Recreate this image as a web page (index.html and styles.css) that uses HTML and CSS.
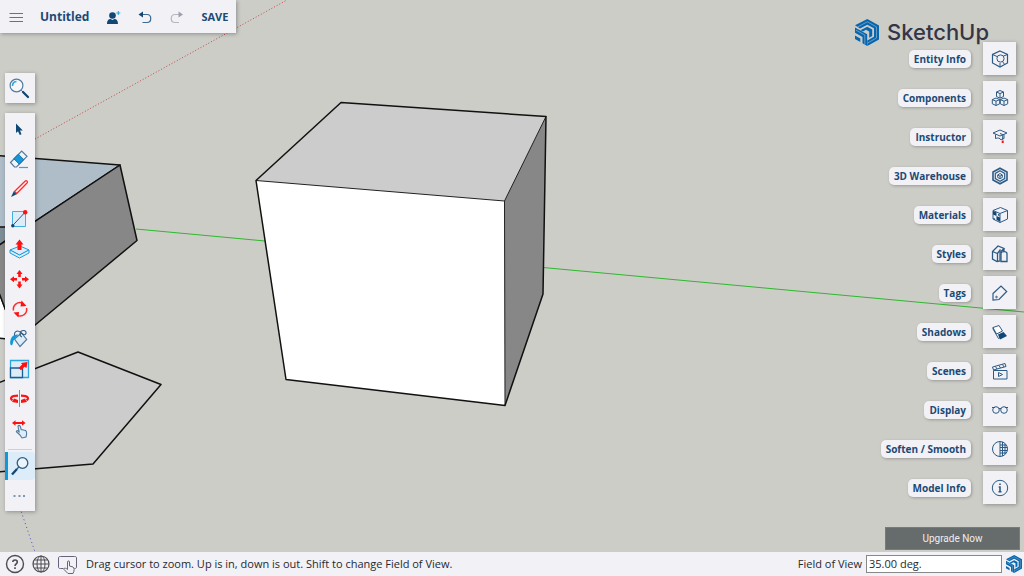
FILE: index.html
```html
<!DOCTYPE html>
<html lang="en">
<head>
<meta charset="utf-8">
<meta name="viewport" content="width=device-width, initial-scale=1">
<title>Untitled - SketchUp</title>
<link rel="stylesheet" href="styles.css">
</head>
<body>
<svg class="defs" aria-hidden="true">
  <symbol id="mark" viewBox="0 0 24 27">
    <path d="M0 6.2 12.3 0 24 6.4V20.4L12.3 27V21.5L19 17.7V9.3L12.3 5.7 5 9.4Z" fill="#0766b0"/>
    <path d="M0 8.5 12.2 15.2V27L7.5 24.3V18L0 13.8Z" fill="#0766b0"/>
    <path d="M5.5 11.2 12.3 7.8 17.2 10.5V17L14.2 18.8V12.4L11 10.8 8 12.6Z" fill="#0766b0"/>
    <path d="M0 16.6 5.3 19.5V23L0 20Z" fill="#0766b0"/>
    <path d="M2.5 8 12.3 2.8 21.5 7.9V19L12.3 24.2M1 11.2 9.8 16V25.5" fill="none" stroke="#a9c0cb" stroke-width=".6"/>
  </symbol>
</svg>
<div class="app">
  <main class="workspace">
    <svg class="scene" role="img" aria-label="Model view">
      <path class="axis-red" d="M35 139 287 0"/>
      <path class="axis-blue" d="M20 508 35 552"/>
      <path class="axis-green" d="M136 229 265 241M543 267.500 1024 312 1600 365"/>
      <g class="edges">
        <path fill="#aebdc8" d="M-2 155.500 120 165-2 246Z"/>
        <path fill="#7e8c95" d="M-2 227H25L-2 246Z"/>
        <path fill="#fff" d="M-2 290 17 340-2 338Z"/>
        <path fill="#878787" d="M120 165 137 240.500 17 340-2 290V246Z"/>
        <path fill="#ccc" d="M78 352 161 384.500 93 464-2 472V383Z"/>
      </g>
      <path fill="#ccc" d="M341 102.500 546 116.500 504.500 201 256 180.500Z"/>
      <path fill="#fff" d="M256 180.500 504.500 201 505 405.500 286 379.500Z"/>
      <path fill="#878787" d="M546 116.500 504.500 201 505 405.500 543 294Z"/>
      <path class="inner" d="M256 180.500 504.500 201 546 116.500M504.500 201 505 405.500"/>
      <path class="outline" d="M341 102.500 546 116.500 543 294 505 405.500 286 379.500 256 180.500Z"/>
    </svg>

    <div class="left">
      <header class="topbar">
        <button aria-label="Menu"><svg class="i16" viewBox="0 0 16 16"><path d="M1.500 4.500H15M1.500 8.500H15M1.500 12.500H15" stroke="#50799b" stroke-width="1.200"/></svg></button>
        <h1 class="title">Untitled</h1>
        <button aria-label="Share"><svg class="i16" viewBox="0 0 16 16"><circle cx="7.500" cy="6.500" r="3.300" fill="#0f4775"/><path d="M2 15C2 11 4 10 5.500 10L7.500 11 9.500 10C11 10 13 11 13 15Z" fill="#0f4775"/><path d="M13.300 2V6M11.300 4H15.300" stroke="#2ea3dc"/></svg></button>
        <button aria-label="Undo"><svg class="i16" viewBox="0 0 16 16"><path d="M5 5.500H10C15 5.500 15 13.500 10 13.500H5.500" fill="none" stroke="#3a6a91" stroke-width="1.200"/><path d="M1.500 5.500 6 2.500V8.500Z" fill="#0f4775"/></svg></button>
        <button aria-label="Redo"><svg class="i16" viewBox="0 0 16 16"><path d="M10 5.500H6C1 5.500 1 13.500 6 13.500H10" fill="none" stroke="#b5b7c0" stroke-width="1.200"/><path d="M14 5.500 9.500 2.500V8.500Z" fill="#9d9fab"/></svg></button>
        <button class="save">SAVE</button>
      </header>

      <button class="search" aria-label="Search"><svg class="i24" viewBox="0 0 24 24"><circle cx="8.500" cy="9.500" r="6.400" fill="#f5f7fa" stroke="#537a9d" stroke-width="1.200"/><path d="M4.500 10C4.500 7.500 6 5.700 8.500 5.500" fill="none" stroke="#2ba7e0" stroke-width="1.700"/><path d="M13.200 14.200 15 16" stroke="#537a9d"/><path d="M15 16 20 21" stroke="#0f4775" stroke-width="2.300" stroke-linecap="round"/></svg></button>

      <nav class="tools" aria-label="Tools">
        <button class="tool" aria-label="Select"><svg class="i24" viewBox="0 0 24 24"><path d="M8 6.500V16L10 14.200 11.800 18 13.500 17.200 12 13.600H14.800Z" fill="#0f4775"/></svg></button>
        <button class="tool" aria-label="Eraser"><svg class="i24" viewBox="0 0 24 24"><path d="M2.500 15.500 13.700 4 19 9.300 8.500 20H6.500Z" fill="#eef5fb" stroke="#537a9d" stroke-width="1.200"/><path d="M5.800 11.800 10.300 7.200 15.800 12.600 11.300 17.200Z" fill="#0f98db" stroke="#1c5e91" stroke-width=".8"/><path d="M11 20.500H20" stroke="#2ba7e0" stroke-width="1.200"/></svg></button>
        <button class="tool" aria-label="Line"><svg class="i24" viewBox="0 0 24 24"><path d="M6.500 14.500 17 4.200C18.500 3 20.300 4.600 19 6L8.700 16.500Z" fill="#fff" stroke="#ff2a2a" stroke-width="1.300"/><path d="M3 20 5.700 14.500 8.700 17.200Z" fill="#0f4775"/></svg></button>
        <button class="tool" aria-label="Rectangle"><svg class="i24" viewBox="0 0 24 24"><path d="M4.500 4.500H17.500V19.500H4.500Z" fill="#dcecf8" stroke="#44aee0"/><path d="M4.500 18.700 17 5.300" stroke="#315c83"/><circle cx="4.800" cy="18.800" r="1.700" fill="#0f4775"/><circle cx="17.200" cy="5.200" r="2.200" fill="#f11"/></svg></button>
        <button class="tool" aria-label="Push/Pull"><svg class="i24" viewBox="0 0 24 24"><path d="M2 13 12 9 21 13 11.500 18Z" fill="#dcecf8" stroke="#1e9bd7"/><path d="M2 13V16L11.500 21 21 16V13L11.500 18Z" fill="#dcecf8" stroke="#1e9bd7"/><path d="M11.500 2.500 15.500 7.500H13.500V13H9.500V7.500H7.500Z" fill="#f11"/></svg></button>
        <button class="tool" aria-label="Move"><svg class="i24" viewBox="0 0 24 24"><path d="M11.500 3 14.500 7H12.800V10H10.200V7H8.500ZM11.500 21.500 14.500 17.500H12.800V14.500H10.200V17.500H8.500ZM2 12.200 6 9.200V11H9V13.500H6V15.200ZM21 12.200 17 9.200V11H14V13.500H17V15.200Z" fill="#f11"/></svg></button>
        <button class="tool" aria-label="Rotate"><svg class="i24" viewBox="0 0 24 24"><path d="M5.500 13.500A6.500 6.500 0 0 1 14.500 6.200M18.500 11A6.500 6.500 0 0 1 9.500 18.400" fill="none" stroke="#ff2a2a" stroke-width="1.500"/><path d="M13.500 3.500 18.500 9 12.500 9.500ZM10.500 20.500 5.500 15.500 11 15Z" fill="#f11"/></svg></button>
        <button class="tool" aria-label="Paint"><svg class="i24" viewBox="0 0 24 24"><path d="M6.500 12 13.500 6 18.700 12.500 12 19.500Z" fill="#dcecf8" stroke="#537a9d" stroke-width="1.200"/><path d="M6.500 9C6 3.500 10 2.500 14 6.500 18 10.500 20 3.500 15.500 3.500 11.500 3.500 11 9 14 10" fill="none" stroke="#315c83" stroke-width="1.100"/><path d="M2.300 17.500C1.500 11 5 7 10.500 7.500L6.500 12C5 13.500 5.500 15.500 4 18.500Z" fill="#0f98db"/></svg></button>
        <button class="tool" aria-label="Scale"><svg class="i24" viewBox="0 0 24 24"><path d="M2.500 3.500H20.500V20.500H2.500Z" fill="#dcecf8" stroke="#2ba7e0" stroke-width="1.300"/><path d="M2.500 11H14.500V20.500H2.500Z" fill="#dcecf8" stroke="#1c5e91" stroke-width="1.300"/><path d="M19.500 5 18.500 11 16.500 9.800 13 13.300 10.500 11 14.200 7.600 13 6Z" fill="#f11"/></svg></button>
        <button class="tool" aria-label="Flip"><svg class="i24" viewBox="0 0 24 24"><path d="M10 8.700C3 8.700 1.500 11.500 4.500 13.300M13 8.700C20 8.700 21.500 11.500 18.500 13.300" fill="none" stroke="#f11" stroke-width="2.200"/><path d="M10 13 6 11.500 4 15 10 16ZM13 13 17 11.500 19 15 13 16Z" fill="#f11"/><path d="M11.500 3V20" stroke="#7890a8"/></svg></button>
        <button class="tool" aria-label="Interact"><svg class="i24" viewBox="0 0 24 24"><path d="M11.500 17.500 8.500 15C8 13.500 9.500 13.200 10.500 14.500L11.300 15.500 10 9.500C10 8 12 8 12.300 9.500L13.200 12.500 17.500 13.500C19 14.500 18.700 17.500 18 20L14 21Z" fill="#dcecf8" stroke="#537a9d" stroke-width="1.100"/><path d="M4 6 7.500 3.200V5H14V3.200L17.500 6 14 8.800V7H7.500V8.800Z" fill="#f11"/></svg></button>
        <hr class="rule">
        <button class="tool active" aria-label="Zoom" aria-pressed="true"><svg class="i24" viewBox="0 0 24 24"><circle cx="14.500" cy="9" r="5.300" fill="#eaf4fb" stroke="#315c83" stroke-width="1.300"/><path d="M10.700 13 9 15" stroke="#315c83" stroke-width="1.300"/><path d="M9 15 4 20.500" stroke="#0f4775" stroke-width="2.300"/></svg></button>
        <button class="tool" aria-label="More tools"><svg class="i24" viewBox="0 0 24 24"><path d="M5.500 13H7.500M10.500 13H12.500M15 13H17" stroke="#537a9d" stroke-width="1.500"/></svg></button>
      </nav>
    </div>

    <div class="right">
      <div class="brand"><svg class="brand-mark"><use href="#mark"/></svg><span>SketchUp</span></div>
      <nav class="panels" aria-label="Panels">
        <button class="panel"><span class="label">Entity Info</span><span class="tile"><svg class="i24" viewBox="0 0 24 24"><path stroke-width="1.200" d="M12 4 19.500 7.500V16L12 20 4.500 16V7.500Z"/><path d="M4.500 7.500 9 9.500M19.500 7.500 15.500 9M12 16V20"/><circle cx="12.500" cy="11.500" r="3.600"/><path d="M14.500 14.500 17 18"/></svg></span></button>
        <button class="panel"><span class="label">Components</span><span class="tile"><svg class="i24" viewBox="0 0 24 24"><path d="M12 4.500 15.500 6V10.500L12 12.200 8.500 10.500V6ZM8.500 6 12 7.600 15.500 6M12 7.600V12M8 12 11.700 13.600V17.800L8 19.500 4.300 17.800V13.600ZM4.300 13.600 8 15.200 11.700 13.600M8 15.200V19.500M16 12 19.700 13.600V17.800L16 19.500 12.300 17.800V13.600ZM12.300 13.600 16 15.200 19.700 13.600M16 15.200V19.500"/></svg></span></button>
        <button class="panel"><span class="label">Instructor</span><span class="tile"><svg class="i24" viewBox="0 0 24 24"><path d="M5 8 12 5 19 8 12 11ZM7.500 9.500V13.500C10 12.500 12 13 13 15M16 9.500V13.500C15 13 13.500 14 13 15M12 8.500 14.700 9.500V15"/><path d="M14.700 15.500V18" class="red"/></svg></span></button>
        <button class="panel"><span class="label">3D Warehouse</span><span class="tile"><svg class="i24" viewBox="0 0 24 24"><path stroke-width="1.600" d="M12 4.200 19 8V16L12 19.800 5 16V8Z"/><path stroke-width="1.200" d="M12 6.800 16.700 9.400V14.600L12 17.200 7.300 14.600V9.400Z"/><path d="M12 9.500 14.300 11V13.500L12 14.700 9.700 13.500V11ZM9.700 11 12 12.200 14.300 11M12 12.200V14.500"/></svg></span></button>
        <button class="panel"><span class="label">Materials</span><span class="tile"><svg class="i24" viewBox="0 0 24 24"><path d="M5 7.500 12.500 4.500 19.500 7.500V16L12 19.500 5 16ZM5 7.500 12 10.500 19.500 7.500M12 10.500V19.500"/><path class="solid" d="M5 8 8.500 9.500V13L5 11.500ZM8.500 13 12 14.500V18.500L8.500 17ZM5.500 15 7 15.500V17L5.500 16ZM10 11 11.500 11.500V13L10 12.500Z"/></svg></span></button>
        <button class="panel"><span class="label">Styles</span><span class="tile"><svg class="i24" viewBox="0 0 24 24"><path stroke-width="1.300" d="M4.500 9.500 10 4 16 6.500 12 10.500V19L9 19.500 4.500 17ZM4.500 9.500 9.500 11.500 12.500 7.500M9.500 11.500V19M16 6.500V9.500"/><path stroke-width="1.300" fill="#f2f1f6" d="M13 11.500C13 9 19 9 19 11.500V19.500H13Z"/></svg></span></button>
        <button class="panel"><span class="label">Tags</span><span class="tile"><svg class="i24" viewBox="0 0 24 24"><path stroke-width="1.200" d="M5 12.500 13 5 18.700 10.500 11 18.500 5 19Z"/><circle cx="8.500" cy="16" r=".8"/></svg></span></button>
        <button class="panel"><span class="label">Shadows</span><span class="tile"><svg class="i24" viewBox="0 0 24 24"><path d="M5 7.500 11 5.500 14.500 11 8.500 14Z" fill="#fff"/><path d="M5 7.500V9L10.500 18.500 12 17.500"/><path class="solid" d="M10 14.500 15.500 12 19 16 12 19.500Z"/></svg></span></button>
        <button class="panel"><span class="label">Scenes</span><span class="tile"><svg class="i24" viewBox="0 0 24 24"><path d="M5.500 11.500H19V20H5.500ZM4.500 8 17 4.500 18 7.500 5.500 11ZM7.500 7.500 9 10M11 6.500 12.500 9M14.500 5.500 16 8M10.500 13.500V17.500L14.500 15.500Z"/></svg></span></button>
        <button class="panel"><span class="label">Display</span><span class="tile"><svg class="i24" viewBox="0 0 24 24"><circle cx="8" cy="12" r="3.300"/><circle cx="16" cy="12" r="3.300"/><path d="M4 9.500H7M17 9.500H20M11 10.500H13"/></svg></span></button>
        <button class="panel"><span class="label">Soften / Smooth</span><span class="tile"><svg class="i24" viewBox="0 0 24 24"><circle cx="12" cy="12" r="7.500"/><path d="M12 4.500V19.500M14.500 5V19M17 7V17M12 8H18M12 10.500H19.500M12 13.500H19.500M12 16H18"/></svg></span></button>
        <button class="panel"><span class="label">Model Info</span><span class="tile"><svg class="i24" viewBox="0 0 24 24"><circle cx="12" cy="12" r="7.700"/><path stroke-width="1.600" d="M12 7.500V9M10.700 11H12V16M10.500 15.800H13.500"/></svg></span></button>
      </nav>
      <button class="upgrade">Upgrade Now</button>
    </div>
  </main>

  <footer class="status">
    <button aria-label="Help"><svg class="i20" viewBox="0 0 20 20"><circle cx="10" cy="10" r="8.500" fill="none" stroke="#4c4c52" stroke-width="1.400"/><path d="M7.800 8C7.800 5.300 12.300 5.500 12.300 8 12.300 9.800 10 9.800 10 12M10 13.300V15" fill="none" stroke="#4c4c52" stroke-width="1.600"/></svg></button>
    <button aria-label="Language"><svg class="i20" viewBox="0 0 20 20"><g fill="none" stroke="#4c4c52"><circle cx="10" cy="10" r="8" stroke-width="1.200"/><ellipse cx="10" cy="10" rx="4" ry="8"/><path d="M10 2V18M2 10H18M3.500 6H16.500M3.500 14H16.500"/></g></svg></button>
    <button aria-label="Gestures"><svg class="i20" viewBox="0 0 20 20"><path d="M6.500 14.500H3.500C2 14.500 1.500 14 1.500 13V4C1.500 3 2 2.500 3.500 2.500H17.500C19 2.500 19.500 3 19.500 4V13C19.500 14 19 14.500 17.500 14.500" fill="none" stroke="#66637a"/><path d="M10.500 19 7 15.500C6.500 14 8.500 13.500 10.500 15.500V8C10.500 6.500 12.500 6.500 12.500 8V12L16 13C17.500 13.500 17.500 17 16 19.500H11Z" fill="#f2f1f6" stroke="#66637a"/></svg></button>
    <p class="hint">Drag cursor to zoom. Up is in, down is out. Shift to change Field of View.</p>
    <label for="fov">Field of View</label>
    <input id="fov" type="text" value="35.00 deg.">
    <svg class="status-mark" aria-hidden="true"><use href="#mark"/></svg>
  </footer>
</div>
</body>
</html>
```
FILE: styles.css
```css
* { box-sizing: border-box; }
body { margin: 0; font-family: "Open Sans", "Noto Sans", sans-serif; font-size: 11px; color: #252a2e; }
button { display: flex; align-items: center; justify-content: center; padding: 0; border: 0; background: none; font: inherit; color: #1b4a75; cursor: pointer; }
svg { display: block; flex: none; }
.defs { position: absolute; width: 0; height: 0; }
.i16 { width: 16px; height: 16px; }
.i20 { width: 20px; height: 20px; }
.i24 { width: 24px; height: 24px; }

.app { display: flex; flex-direction: column; height: 100vh; }
.workspace { position: relative; flex: 1; min-height: 0; display: flex; justify-content: space-between; background: #cccdc7; overflow: hidden; }
.scene { position: absolute; inset: 0; width: 100%; height: 100%; }
.axis-red { fill: none; stroke: #c4484a; stroke-width: 1; stroke-dasharray: 1 2; }
.axis-blue { fill: none; stroke: #4a4ac8; stroke-width: 1; stroke-dasharray: 1 3; }
.axis-green { fill: none; stroke: #2eb82e; stroke-width: 1; }
.edges { stroke: #111; stroke-width: 1.5; stroke-linejoin: round; }
.inner { fill: none; stroke: #222; stroke-width: 1; }
.outline { fill: none; stroke: #111; stroke-width: 1.5; stroke-linejoin: round; }

.left { position: relative; display: flex; flex-direction: column; align-items: flex-start; }
.topbar { display: flex; align-items: center; gap: 16px; height: 33px; padding: 0 8px; background: #f2f1f6; box-shadow: 1px 1px 4px rgba(0, 0, 0, .3); }
.title { margin: 0; font-size: 12px; line-height: 16px; font-weight: 700; color: #1b4a75; }
.save { font-size: 11px; line-height: 16px; font-weight: 700; }
.search { width: 30px; height: 30px; margin: 40px 0 10px 5px; background: #f2f1f6; box-shadow: 1px 1px 4px rgba(0, 0, 0, .3); }
.tools { width: 30px; margin-left: 5px; padding: 1px 0; background: #f2f1f6; box-shadow: 1px 1px 4px rgba(0, 0, 0, .3); }
.tool { width: 30px; height: 30px; }
.rule { height: 1px; margin: 5px 3px 2px; border: 0; background: #cfcfd6; }
.active { height: 28px; background: #dcecf8; border-radius: 0 4px 4px 0; box-shadow: inset 3px 0 #0f98db; }

.right { position: relative; display: flex; flex-direction: column; align-items: flex-end; padding: 18px 0 2px; }
.brand { display: flex; align-items: center; gap: 8px; height: 24px; margin-right: 35px; padding-top: 4px; font-family: Inter, Roboto, sans-serif; font-size: 22px; line-height: 28px; font-weight: 500; color: #363545; }
.brand-mark { width: 24px; height: 27px; }
.panels { display: flex; flex-direction: column; gap: 6px; padding-right: 8px; }
.panel { justify-content: flex-end; gap: 12px; }
.label { padding: 1px 5px; border-radius: 5px; background: #f2f1f6; box-shadow: 1px 1px 3px rgba(0, 0, 0, .25); font-size: 10px; line-height: 16px; font-weight: 700; }
.tile { display: flex; align-items: center; justify-content: center; width: 33px; height: 33px; background: #f2f1f6; box-shadow: 1px 1px 4px rgba(0, 0, 0, .3); }
.tile svg { fill: none; stroke: #2c5a85; }
.tile .solid { fill: #0f4775; stroke: none; }
.tile .red { stroke: #f11; stroke-width: 2; }
.upgrade { width: 135px; height: 23px; margin: auto 4px 0 0; background: #666b6b; border: 1px solid #777b7b; font-family: Roboto, sans-serif; font-size: 10px; color: #eee; }

.status { display: flex; align-items: center; height: 24px; padding: 0 2px 0 5px; background: #f2f1f6; font-size: 11px; line-height: 16px; }
.status button { margin-right: 6px; }
.hint { flex: 1; margin: 0 0 0 3px; }
.status input { width: 136px; height: 18px; margin: 0 4px; padding: 0 2px 1px; border: 1px solid #888; background: #fff; font: inherit; color: inherit; }
.status-mark { width: 16px; height: 18px; }
```
